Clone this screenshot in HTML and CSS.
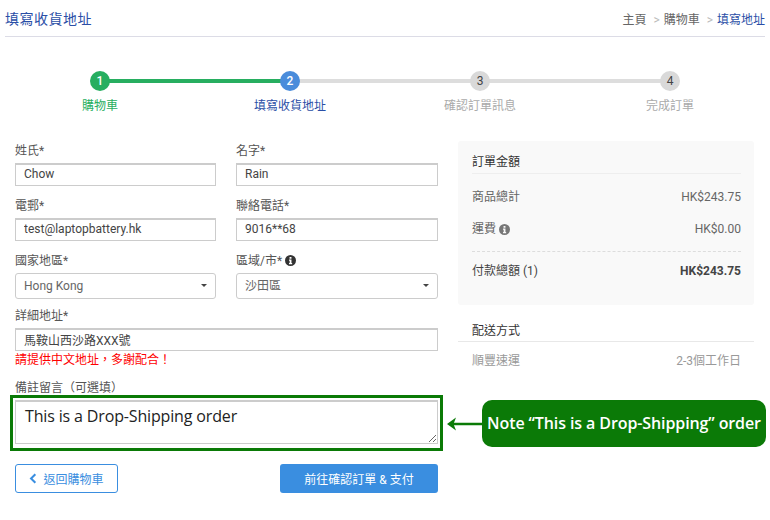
FILE: index.html
```html
<!DOCTYPE html>
<html lang="zh-Hant">
<head>
    <meta charset="UTF-8">
    <meta name="viewport" content="width=device-width, initial-scale=1.0">
    <title>填寫收貨地址</title>
    <link rel="stylesheet" href="styles.css">
</head>
<body>
    <div class="page">
        <header class="top-bar">
            <h1>填寫收貨地址</h1>
            <nav class="crumbs">
                <a href="#">主頁</a><span class="sep">&gt;</span><a href="#">購物車</a><span class="sep">&gt;</span><a href="#" class="current">填寫地址</a>
            </nav>
        </header>

        <ol class="steps">
            <li class="step done"><span class="dot">1</span><span class="step-name">購物車</span></li>
            <li class="step active"><span class="dot">2</span><span class="step-name">填寫收貨地址</span></li>
            <li class="step"><span class="dot">3</span><span class="step-name">確認訂單訊息</span></li>
            <li class="step"><span class="dot">4</span><span class="step-name">完成訂單</span></li>
        </ol>

        <main class="content">
            <form class="address-form">
                <div class="field-grid">
                    <div class="field">
                        <label for="lastName">姓氏*</label>
                        <input type="text" id="lastName" value="Chow">
                    </div>
                    <div class="field">
                        <label for="firstName">名字*</label>
                        <input type="text" id="firstName" value="Rain">
                    </div>
                    <div class="field">
                        <label for="email">電郵*</label>
                        <input type="text" id="email" value="test@laptopbattery.hk">
                    </div>
                    <div class="field">
                        <label for="phone">聯絡電話*</label>
                        <input type="text" id="phone" value="9016**68">
                    </div>
                    <div class="field">
                        <label for="country">國家地區*</label>
                        <div class="select-box">
                            <select id="country"><option>Hong Kong</option></select>
                        </div>
                    </div>
                    <div class="field">
                        <label for="area">區域/市*
                            <svg class="info" viewBox="0 0 16 16"><path fill-rule="evenodd" d="M8 0a8 8 0 1 1 0 16A8 8 0 0 1 8 0zM6.600 2.800h2.800v2.600H6.600zM5.800 6.600h3.600v5.200h1v1.600H5.800v-1.600h1V8.200h-1z"/></svg>
                        </label>
                        <div class="select-box">
                            <select id="area"><option>沙田區</option></select>
                        </div>
                    </div>
                </div>

                <div class="field field-address">
                    <label for="address">詳細地址*</label>
                    <input type="text" id="address" value="馬鞍山西沙路XXX號">
                    <p class="hint">請提供中文地址，多謝配合！</p>
                </div>

                <div class="field field-note">
                    <label for="note">備註留言（可選填）</label>
                    <div class="note-box">
                        <textarea id="note">This is a Drop-Shipping order</textarea>
                    </div>
                </div>

                <div class="actions">
                    <a href="#" class="btn btn-back">
                        <svg class="chevron" viewBox="0 0 10 14"><path d="M8 1.500 2.500 7 8 12.500"/></svg>
                        返回購物車
                    </a>
                    <a href="#" class="btn btn-next">前往確認訂單 &amp; 支付</a>
                </div>
            </form>

            <aside class="side">
                <section class="summary">
                    <h2>訂單金額</h2>
                    <div class="row"><span>商品總計</span><span>HK$243.75</span></div>
                    <div class="row row-ship">
                        <span>運費 <svg class="info info-grey" viewBox="0 0 16 16"><path fill-rule="evenodd" d="M8 0a8 8 0 1 1 0 16A8 8 0 0 1 8 0zM6.600 2.800h2.800v2.600H6.600zM5.800 6.600h3.600v5.200h1v1.600H5.800v-1.600h1V8.200h-1z"/></svg></span>
                        <span>HK$0.00</span>
                    </div>
                    <div class="row row-total"><span>付款總額 (1)</span><strong>HK$243.75</strong></div>
                </section>
                <section class="shipping">
                    <h2>配送方式</h2>
                    <div class="row"><span>順豐速運</span><span>2-3個工作日</span></div>
                </section>
            </aside>
        </main>

        <!-- annotation over the screenshot -->
        <div class="callout">
            <svg class="callout-arrow" viewBox="0 0 36 16"><path d="M36 8H4"/><path class="head" d="M0 8 9 1.500 6.500 8 9 14.500z"/></svg>
            <span class="callout-text">Note “This is a Drop-Shipping” order</span>
        </div>
    </div>
</body>
</html>
```

FILE: styles.css
```css
/* Reset some default styles */
body, h1, h2, p, ol {
    margin: 0;
    padding: 0;
}

body {
    background: #fff;
    color: #555;
    font-family: Roboto, "Noto Sans CJK TC", sans-serif;
    font-size: 12px;
}

a {
    text-decoration: none;
}

.page {
    position: relative;
    width: 770px;
    height: 520px;
    overflow: hidden;
}

/* Title bar */
.top-bar {
    display: flex;
    justify-content: space-between;
    align-items: center;
    height: 36px;
    margin: 0 5px;
    border-bottom: 1px solid #dcdce6;
}

.top-bar h1 {
    font-size: 14px;
    font-weight: 400;
    letter-spacing: 0.5px;
    color: #2a4ea6;
}

.crumbs {
    color: #666;
}

.crumbs a {
    color: #666;
}

.crumbs .current {
    color: #2a4ea6;
}

.crumbs .sep {
    margin: 0 4px 0 7px;
    color: #bbb;
}

/* Progress steps */
.steps {
    display: grid;
    grid-template-columns: repeat(4, 190px);
    margin: 34px 0 0 5px;
    list-style: none;
}

.step {
    position: relative;
    display: flex;
    flex-direction: column;
    align-items: center;
    color: #aaa;
}

.step:not(:last-child)::after {
    content: '';
    position: absolute;
    top: 8px;
    left: 50%;
    width: 100%;
    height: 4px;
    background: #ddd;
}

.step.done:not(:last-child)::after {
    background: #27ae60;
}

.dot {
    position: relative;
    z-index: 1;
    width: 20px;
    height: 20px;
    border-radius: 50%;
    background: #d9d9d9;
    color: #444;
    font-size: 12px;
    line-height: 20px;
    text-align: center;
}

.step-name {
    margin-top: 6px;
    line-height: 18px;
}

.step.done .dot {
    background: #27ae60;
    color: #fff;
    font-weight: 500;
}

.step.done .step-name {
    color: #27ae60;
}

.step.active .dot {
    background: #4a8cdb;
    color: #fff;
    font-weight: 500;
}

.step.active .step-name {
    color: #2a4ea6;
}

/* Main two columns */
.content {
    display: flex;
    align-items: flex-start;
    gap: 20px;
    margin: 26px 16px 0 15px;
}

.address-form {
    width: 423px;
    flex: none;
    margin-top: 2px;
}

.side {
    flex: 1;
}

.field-grid {
    display: grid;
    grid-template-columns: 201px 202px;
    column-gap: 20px;
}

.field {
    margin-bottom: 12px;
}

.field label {
    display: block;
    height: 16px;
    margin-bottom: 4px;
    line-height: 16px;
    color: #555;
}

.field input, .field textarea, .field select {
    display: block;
    width: 100%;
    box-sizing: border-box;
    margin: 0;
    border: 1px solid #ccc;
    outline: none;
    font-family: Roboto, "Noto Sans CJK TC", sans-serif;
    font-size: 12px;
}

.field input {
    height: 23px;
    padding: 0 8px 2px;
    border-width: 2px 1px 1px;
    color: #444;
}

.info {
    width: 11px;
    height: 11px;
    vertical-align: -1px;
    fill: #333;
}

.info-grey {
    fill: #777;
}

.select-box {
    position: relative;
}

.field select {
    height: 26px;
    padding: 0 8px;
    border-radius: 3px;
    background: #fff;
    color: #666;
    appearance: none;
}

.select-box::after {
    content: '';
    position: absolute;
    top: 11px;
    right: 9px;
    border-top: 3px solid #444;
    border-left: 3px solid transparent;
    border-right: 3px solid transparent;
    pointer-events: none;
}

.field-grid .field:nth-child(n+5) {
    margin-bottom: 9px;
}

.field-address {
    margin-bottom: 0;
}

.hint {
    height: 18px;
    padding-top: 1px;
    line-height: 16px;
    color: #f00;
}

.field-note {
    margin-top: 11px;
    margin-bottom: 0;
}

.field-note label {
    height: 15px;
    margin-bottom: -1px;
    line-height: 15px;
}

/* Green frame round the note */
.note-box {
    margin: 0 -5px;
    padding: 2px 2px 4px;
    border: 3px solid #0a7a06;
}

.field-note textarea {
    height: 44px;
    padding: 3px 9px;
    font-family: "Open Sans", sans-serif;
    font-size: 16px;
    letter-spacing: -0.15px;
    color: #222;
    border-width: 2px 1px 1px;
}

.actions {
    display: flex;
    justify-content: space-between;
    margin-top: 13px;
}

.btn {
    display: flex;
    align-items: center;
    justify-content: center;
    height: 29px;
    box-sizing: border-box;
    border-radius: 3px;
}

.btn-back {
    width: 103px;
    gap: 6px;
    border: 1px solid #3a8ee0;
    color: #3a8ee0;
}

.chevron {
    width: 8px;
    height: 11px;
    fill: none;
    stroke: #3a8ee0;
    stroke-width: 2.6;
}

.btn-next {
    width: 158px;
    background: #3a8ee0;
    color: #fff;
}

/* Right side panels */
.side h2 {
    font-size: 12px;
    font-weight: 400;
    color: #333;
    line-height: 16px;
}

.row {
    display: flex;
    justify-content: space-between;
    line-height: 16px;
    color: #666;
}

.summary {
    height: 164px;
    box-sizing: border-box;
    padding: 13px 13px 0 14px;
    border-radius: 3px;
    background: #f9f9f9;
}

.summary h2 {
    padding-bottom: 3px;
    border-bottom: 1px solid #eee;
    margin-bottom: 15px;
}

.row-ship {
    margin-top: 16px;
    padding-bottom: 14px;
    border-bottom: 1px dashed #ddd;
}

.info-grey {
    vertical-align: -1.500px;
}

.row-total {
    margin-top: 11px;
    color: #444;
}

.row-total strong {
    font-weight: 700;
}

.shipping {
    margin-top: 18px;
}

.shipping h2 {
    padding: 0 14px 2px;
    border-bottom: 1px solid #e8e8e8;
    margin-bottom: 11px;
}

.shipping .row {
    padding: 0 13px 0 14px;
    color: #999;
}

/* Annotation */
.callout {
    position: absolute;
    top: 400px;
    left: 447px;
    display: flex;
    align-items: center;
}

.callout-arrow {
    width: 36px;
    height: 16px;
    margin-right: -1px;
    fill: none;
    stroke: #0a7a06;
    stroke-width: 2.500;
}

.callout-arrow .head {
    fill: #0a7a06;
    stroke: none;
}

.callout-text {
    display: block;
    width: 284px;
    height: 47px;
    box-sizing: border-box;
    border-radius: 10px;
    background: #0b7a07;
    color: #fff;
    font-family: "Open Sans", sans-serif;
    font-size: 16px;
    font-weight: 600;
    letter-spacing: -0.1px;
    line-height: 47px;
    text-align: center;
    white-space: nowrap;
}
```
